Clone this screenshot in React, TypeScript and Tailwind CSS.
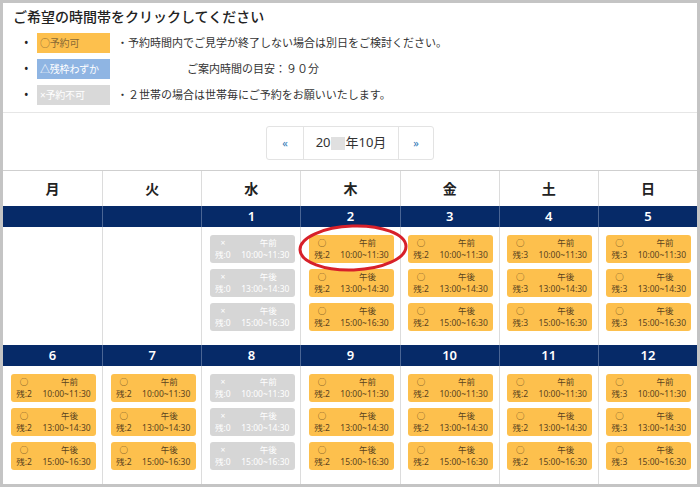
import React from 'react';

type Slot = { ok: boolean; label: string; time: string; left: number };
type Day = { date?: number; slots: Slot[] };

const TIMES: [string, string][] = [
  ['午前', '10:00~11:30'],
  ['午後', '13:00~14:30'],
  ['午後', '15:00~16:30'],
];

const mk = (ok: boolean, left: number): Slot[] =>
  TIMES.map(([label, time]) => ({ ok, label, time, left }));

const WEEK1: Day[] = [
  { slots: [] },
  { slots: [] },
  { date: 1, slots: mk(false, 0) },
  { date: 2, slots: mk(true, 2) },
  { date: 3, slots: mk(true, 2) },
  { date: 4, slots: mk(true, 3) },
  { date: 5, slots: mk(true, 3) },
];

const WEEK2: Day[] = [
  { date: 6, slots: mk(true, 2) },
  { date: 7, slots: mk(true, 2) },
  { date: 8, slots: mk(false, 0) },
  { date: 9, slots: mk(true, 2) },
  { date: 10, slots: mk(true, 2) },
  { date: 11, slots: mk(true, 2) },
  { date: 12, slots: mk(true, 3) },
];

const DAYS = ['月', '火', '水', '木', '金', '土', '日'];

const SlotButton = ({ s }: { s: Slot }) => (
  <div
    className={`w-[85px] h-[28px] rounded-[3px] flex flex-col justify-center text-[8.5px] leading-[12px] cursor-pointer ${
      s.ok ? 'bg-[#fdc04d] text-[#5a4320]' : 'bg-[#d6d6d6] text-white'
    }`}
  >
    <div className="flex">
      <span className="w-[26px] text-center">{s.ok ? '○' : '×'}</span>
      <span className="flex-1 text-center pl-[6px]">{s.label}</span>
    </div>
    <div className="flex">
      <span className="w-[26px] text-center">残:{s.left}</span>
      <span className="flex-1 text-center">{s.time}</span>
    </div>
  </div>
);

const Week = ({ days }: { days: Day[] }) => (
  <>
    <div className="grid grid-cols-7 bg-[#062a68] h-[21px]">
      {days.map((d, i) => (
        <div
          key={i}
          className={`flex items-center justify-center text-white text-[13px] font-semibold ${
            i > 0 ? 'border-l border-[#4a6594]' : ''
          }`}
        >
          {d.date ?? ''}
        </div>
      ))}
    </div>
    <div className="grid grid-cols-7 h-[118px]">
      {days.map((d, i) => (
        <div
          key={i}
          className={`flex flex-col items-center gap-[6px] pt-[8px] pl-[2px] ${
            i > 0 ? 'border-l border-[#dcdcdc]' : ''
          }`}
        >
          {d.slots.map((s, j) => (
            <SlotButton key={j} s={s} />
          ))}
        </div>
      ))}
    </div>
  </>
);

const LegendRow = ({
  badge,
  badgeClass,
  text,
  textClass = '',
}: {
  badge: string;
  badgeClass: string;
  text: string;
  textClass?: string;
}) => (
  <li className="flex items-center h-[26px]">
    <span className="w-[24px] pl-[11px] text-[12px] text-[#222]">•</span>
    <span
      className={`w-[73px] h-[20px] flex items-center px-[3px] text-[10px] tracking-[-0.2px] whitespace-nowrap overflow-hidden ${badgeClass}`}
    >
      {badge}
    </span>
    <span className={`text-[11px] text-[#333] whitespace-nowrap ${textClass}`}>{text}</span>
  </li>
);

export default function App() {
  return (
    <div
      className="w-[700px] h-[487px] border-[3px] border-[#c4c4c4] bg-white relative overflow-hidden text-[#333]"
      style={{ fontFamily: '"Noto Sans", "Noto Sans CJK JP", sans-serif' }}
    >
      {/* legend */}
      <div className="h-[110px] border-b border-[#e6e6e6] pl-[10px] pt-[4px]">
        <h2 className="text-[14px] leading-[20px] font-medium text-[#222]">ご希望の時間帯をクリックしてください</h2>
        <ul className="mt-[3px]">
          <LegendRow
            badge="○予約可"
            badgeClass="bg-[#fdc04d] text-[#8a6a35]"
            text="・予約時間内でご見学が終了しない場合は別日をご検討ください。"
            textClass="pl-[7px]"
          />
          <LegendRow
            badge="△残枠わずか"
            badgeClass="bg-[#8fb5e3] text-white"
            text="ご案内時間の目安：９０分"
            textClass="pl-[77px]"
          />
          <LegendRow
            badge="×予約不可"
            badgeClass="bg-[#d9d9d9] text-white"
            text="・２世帯の場合は世帯毎にご予約をお願いいたします。"
            textClass="pl-[7px]"
          />
        </ul>
      </div>

      {/* pagination */}
      <div className="h-[57px] flex items-start justify-center pt-[13px]">
        <div className="flex h-[34px] border border-[#e3e3e3] rounded-[3px]">
          <span className="w-[36px] flex items-center justify-center text-[11px] text-[#337ab7]">«</span>
          <span className="w-[96px] flex items-center justify-center border-x border-[#e3e3e3] text-[13px] text-[#333]">
            20
            <span className="inline-block w-[14px] h-[13px] bg-[#e0e0e0] mr-[1px]" />
            年10月
          </span>
          <span className="w-[34px] flex items-center justify-center text-[11px] text-[#337ab7]">»</span>
        </div>
      </div>

      {/* calendar */}
      <div className="border-t border-[#cfcfcf]">
        <div className="grid grid-cols-7 h-[35px]">
          {DAYS.map((d, i) => (
            <div
              key={d}
              className={`flex items-center justify-center text-[14px] font-bold text-[#222] ${
                i > 0 ? 'border-l border-[#dcdcdc]' : ''
              }`}
            >
              {d}
            </div>
          ))}
        </div>
        <Week days={WEEK1} />
        <Week days={WEEK2} />
      </div>

      {/* highlight circle */}
      <svg
        className="absolute pointer-events-none"
        style={{ left: 293, top: 218 }}
        width="120"
        height="56"
        viewBox="0 0 120 56"
      >
        <ellipse cx="57" cy="27" rx="53" ry="22" fill="none" stroke="#d7202a" strokeWidth="3" transform="rotate(-2 57 27)" />
      </svg>
    </div>
  );
}
